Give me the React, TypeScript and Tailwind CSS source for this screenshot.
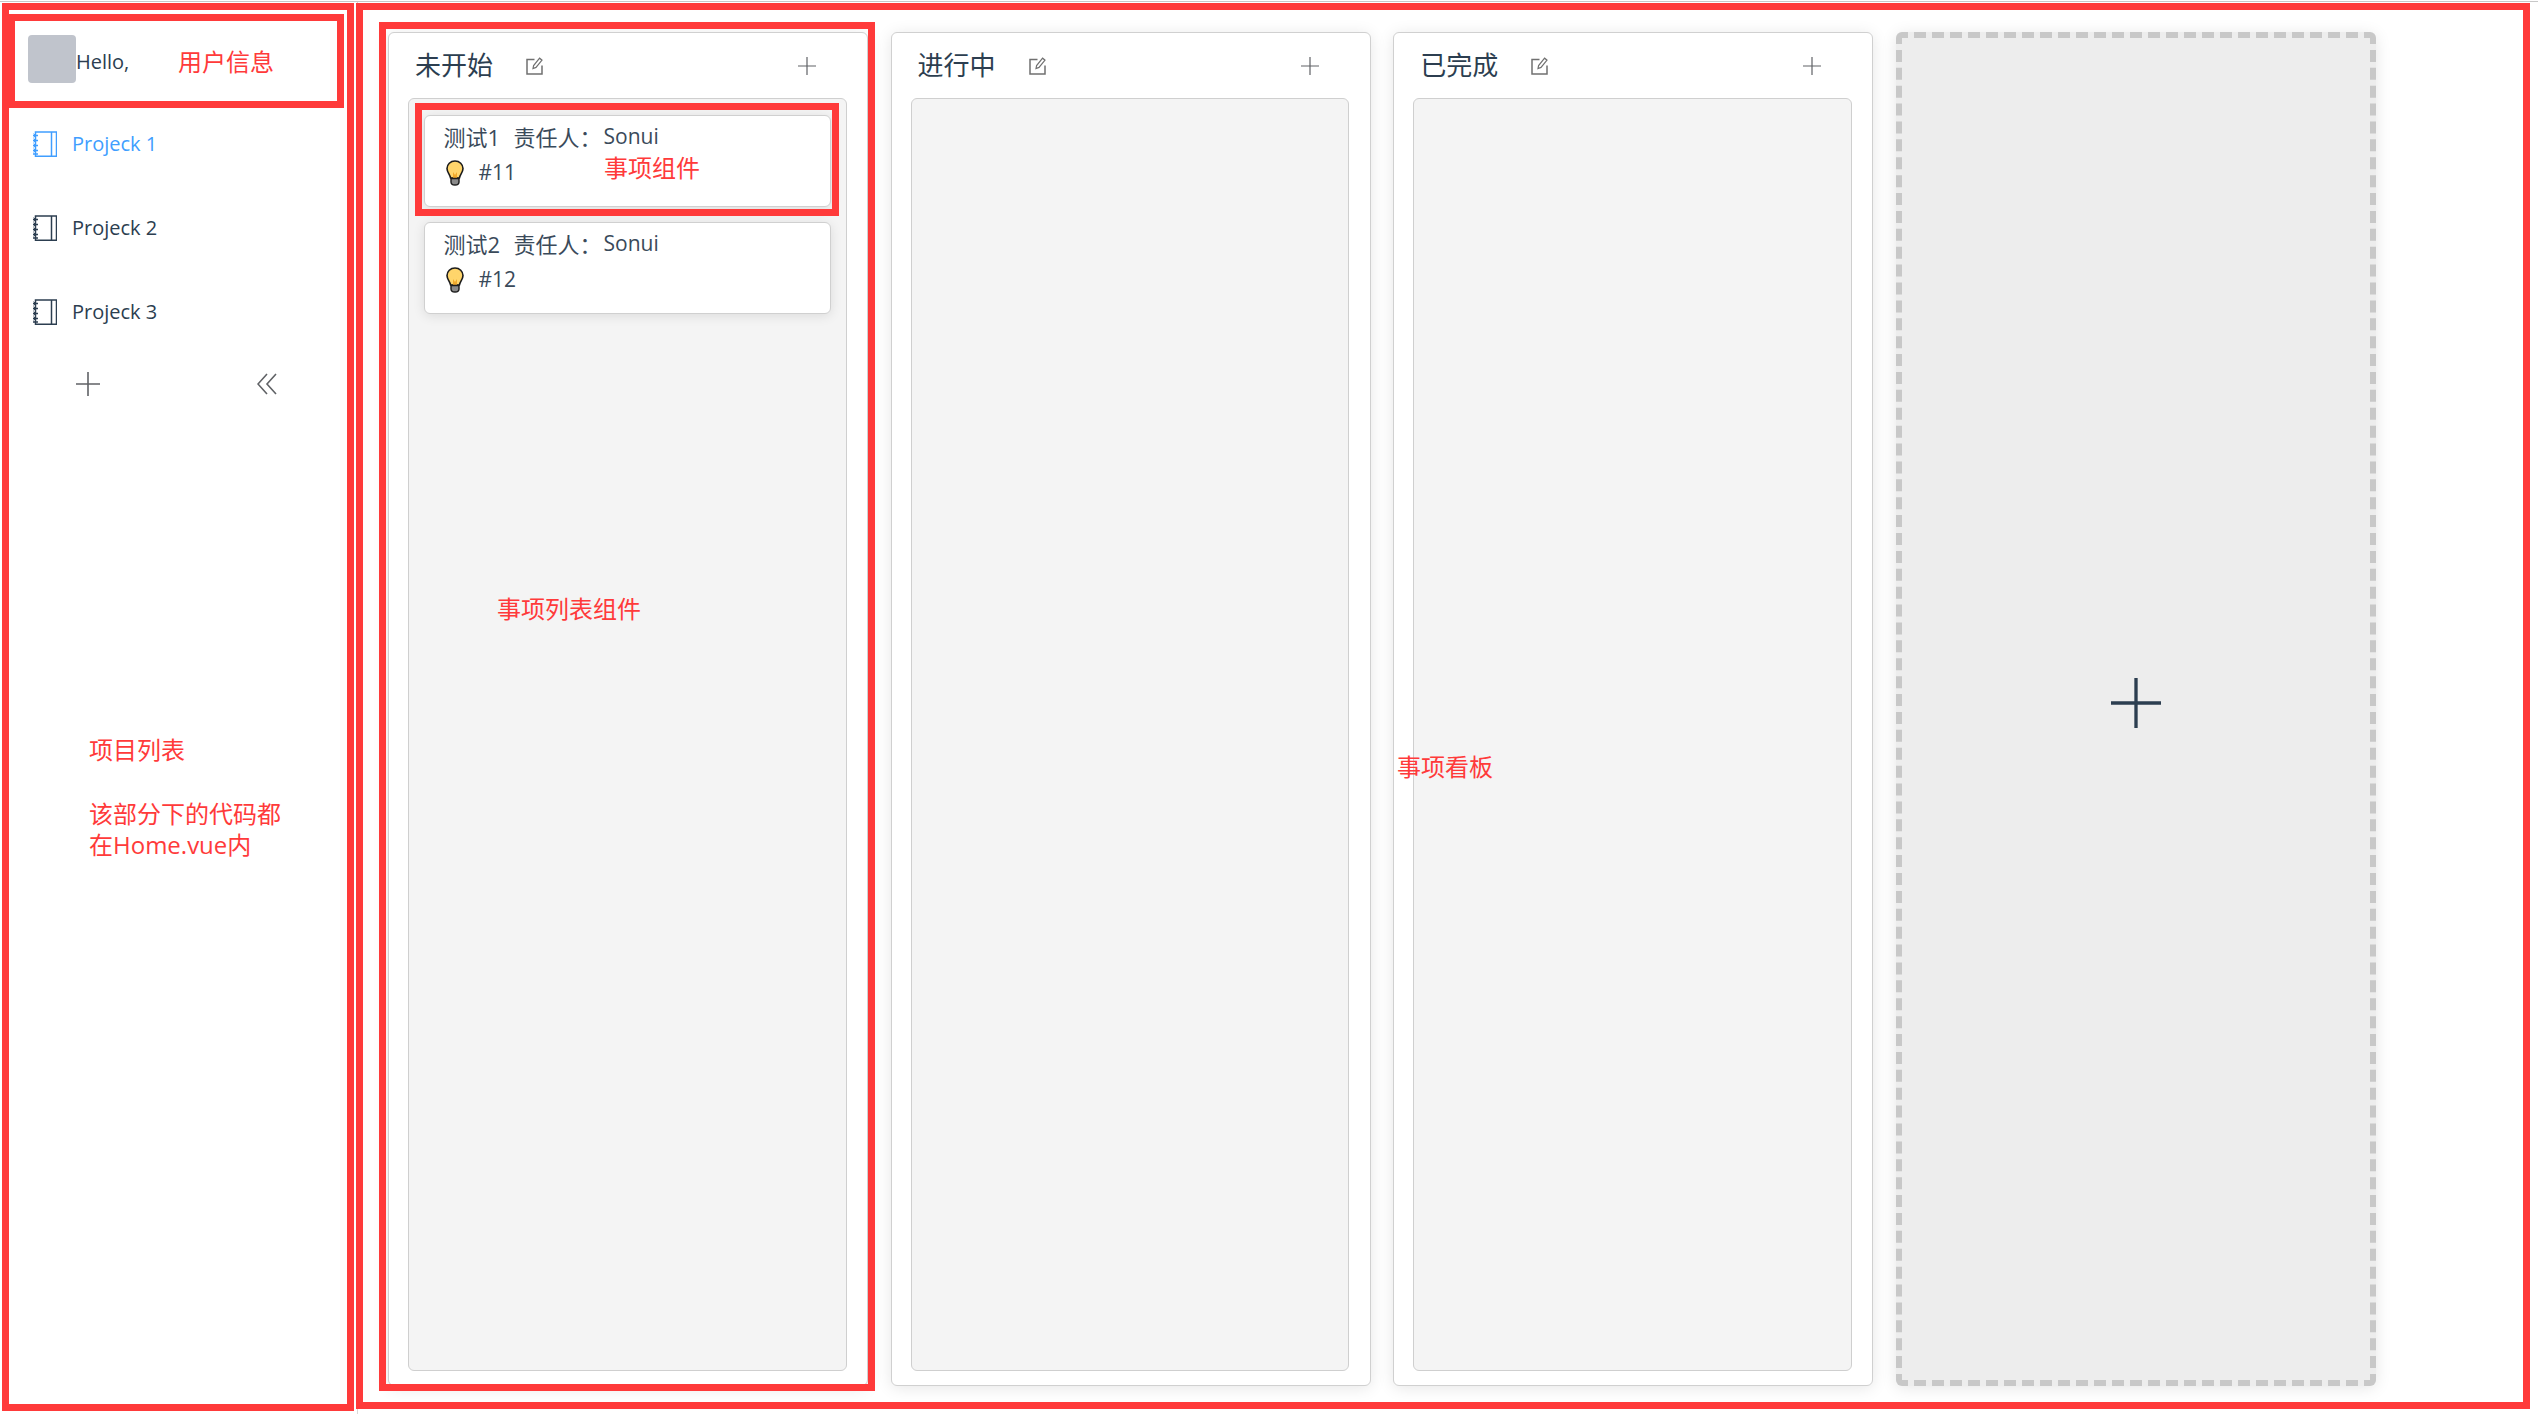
const cjk = "font-['Open_Sans','Noto_Sans_CJK_SC',sans-serif]";

function Notebook({ className }: { className: string }) {
    return (
        <svg viewBox="0 0 24 26" className={className} fill="none" stroke="currentColor" strokeWidth="1.5">
            <path d="M2.5 1h21v24.3h-21z" />
            <path d="M18.5 1v24.3" />
            <path d="M0 4.5h5M0 9.5h5M0 14.5h5M0 19.5h5M0 23h5" strokeWidth="1.6" />
            <path d="M0.5 2.8l2.5 1.7-2.5 1.7M0.5 7.8l2.5 1.7-2.5 1.7M0.5 12.8l2.5 1.7-2.5 1.7M0.5 17.8l2.5 1.7-2.5 1.7" strokeWidth="1" />
        </svg>
    );
}

function Plus({ className }: { className: string }) {
    return (
        <svg viewBox="0 0 24 24" className={className} fill="none" stroke="currentColor" strokeWidth="1.6">
            <path d="M12 0v24M0 12h24" />
        </svg>
    );
}

function EditIcon() {
    return (
        <svg viewBox="0 0 17 18" className="w-[17px] h-[18px] text-[#707070]" fill="none" stroke="currentColor">
            <path d="M8.5 2.5H1v14.5h15V8.5" strokeWidth="1.5" />
            <path d="M7 11.5l.6-3L13.6 1.2l2.4 2-6 7.2z" strokeWidth="1.2" />
        </svg>
    );
}

function Bulb() {
    return (
        <svg viewBox="0 0 18 26" className="w-[18px] h-[26px]">
            <path d="M9 1C4.4 1 1 4.4 1 8.6c0 3.6 2.8 5.6 3.6 9.4h8.8c.8-3.8 3.6-5.8 3.6-9.4C17 4.4 13.6 1 9 1z" fill="#ffd56b" stroke="#1c1c1c" strokeWidth="1.6" />
            <path d="M7 12l2 3 2-3v6H7z" fill="#f0a92c" />
            <path d="M5 18.5h8v3.5c0 2.2-1.6 3-4 3s-4-.8-4-3z" fill="#8a8a8a" stroke="#1c1c1c" strokeWidth="1.4" />
        </svg>
    );
}

function TaskCard({ name, no }: { name: string; no: string }) {
    return (
        <div className="h-[92px] rounded-md border-[1.5px] border-[#d0d0d0] bg-white pl-[19px] pt-[5px] shadow-[0_2px_12px_rgba(0,0,0,0.1)]">
            <div className="flex h-[32px] items-center text-[22px] text-[#3a4a5a]">
                <span className="w-[70px]">{name}</span>
                <span className="w-[90px]">责任人：</span>
                <span className="text-[21px]">Sonui</span>
            </div>
            <div className="mt-[3px] flex h-[34px] items-center pl-[2px] text-[21px] text-[#3a4a5a]">
                <Bulb />
                <span className="ml-[15px]">{no}</span>
            </div>
        </div>
    );
}

function Column({ title, children }: { title: string; children?: React.ReactNode }) {
    return (
        <div className="flex w-[480px] flex-col rounded-md border-[1.5px] border-[#d0d0d0] bg-white shadow-[0_2px_16px_rgba(0,0,0,0.1)]">
            <div className="flex h-[65px] items-center pl-[26px] pr-[51px] text-[#2c3e50]">
                <span className="w-[111px] text-[26px]">{title}</span>
                <EditIcon />
                <Plus className="ml-auto h-[18px] w-[18px] text-[#606266]" />
            </div>
            <div className="mb-[14px] ml-[19px] mr-[20.5px] flex flex-1 flex-col gap-[15px] rounded-md border-[1.5px] border-[#cfcfcf] bg-[#f4f4f4] px-[14.5px] pt-[16px]">
                {children}
            </div>
        </div>
    );
}

function Mark({ className }: { className: string }) {
    return <div className={`absolute border-[7px] border-[#ff3a3a] ${className}`} />;
}

function Note({ className, children }: { className: string; children: React.ReactNode }) {
    return <div className={`absolute text-[24px] leading-[31px] text-[#ff3a3a] ${className}`}>{children}</div>;
}

export default function App() {
    const projects = ["Projeck 1", "Projeck 2", "Projeck 3"];

    return (
        <div className={`relative h-[1414px] w-[2538px] overflow-hidden bg-white ${cjk}`}>
            <div className="mt-px flex h-[1413px] border-t border-[#c8c8c8]">
                <aside className="h-full w-[358px] shrink-0 border-r border-[#d8d8d8]">
                    <div className="flex h-[100px] items-start pl-[28px] pt-[33px] text-[20px] text-[#2c3e50]">
                        <div className="h-[48px] w-[48px] rounded-[4px] bg-[#c0c4cc]" />
                        <span className="mt-[12px]">Hello,</span>
                    </div>
                    <div className="flex flex-col">
                        {projects.map((p, i) => (
                            <div
                                key={p}
                                className={`flex h-[84px] items-center pl-[33px] text-[20px] ${i === 0 ? "text-[#409eff]" : "text-[#2c3e50]"}`}
                            >
                                <Notebook className="h-[26px] w-[24px]" />
                                <span className="ml-[15px]">{p}</span>
                            </div>
                        ))}
                    </div>
                    <div className="mt-[18px] flex items-center pl-[76px] text-[#606266]">
                        <Plus className="h-[24px] w-[24px]" />
                        <svg viewBox="0 0 20 22" className="ml-[157px] h-[22px] w-[20px]" fill="none" stroke="currentColor" strokeWidth="1.6">
                            <path d="M10 1L1 11l9 10M19 1l-9 10 9 10" />
                        </svg>
                    </div>
                </aside>
                <main className="flex flex-1 gap-[22.6px] pb-[28px] pl-[30px] pt-[30px]">
                    <Column title="未开始">
                        <TaskCard name="测试1" no="#11" />
                        <TaskCard name="测试2" no="#12" />
                    </Column>
                    <Column title="进行中" />
                    <Column title="已完成" />
                    <div className="flex w-[480px] items-center justify-center rounded-md border-[6px] border-dashed border-[#c8c8c8] bg-[#ededed] pb-[12px] shadow-[0_2px_16px_rgba(0,0,0,0.1)]">
                        <Plus className="h-[50px] w-[50px] text-[#2c3e50]" />
                    </div>
                </main>
            </div>

            {/* red annotations drawn over the screenshot */}
            <Mark className="left-[2px] top-[3px] h-[1408px] w-[352px]" />
            <Mark className="left-[8px] top-[14px] h-[94px] w-[336px]" />
            <Mark className="left-[356px] top-[3px] h-[1406px] w-[2174px]" />
            <Mark className="left-[379px] top-[22px] h-[1369px] w-[496px]" />
            <Mark className="left-[415px] top-[103px] h-[113px] w-[424px]" />
            <Note className="left-[178px] top-[46px]">用户信息</Note>
            <Note className="left-[604px] top-[152px]">事项组件</Note>
            <Note className="left-[497px] top-[593px]">事项列表组件</Note>
            <Note className="left-[1397px] top-[751px]">事项看板</Note>
            <Note className="left-[89px] top-[734px]">项目列表</Note>
            <Note className="left-[89px] top-[798px]">
                该部分下的代码都
                <br />
                在Home.vue内
            </Note>
        </div>
    );
}
